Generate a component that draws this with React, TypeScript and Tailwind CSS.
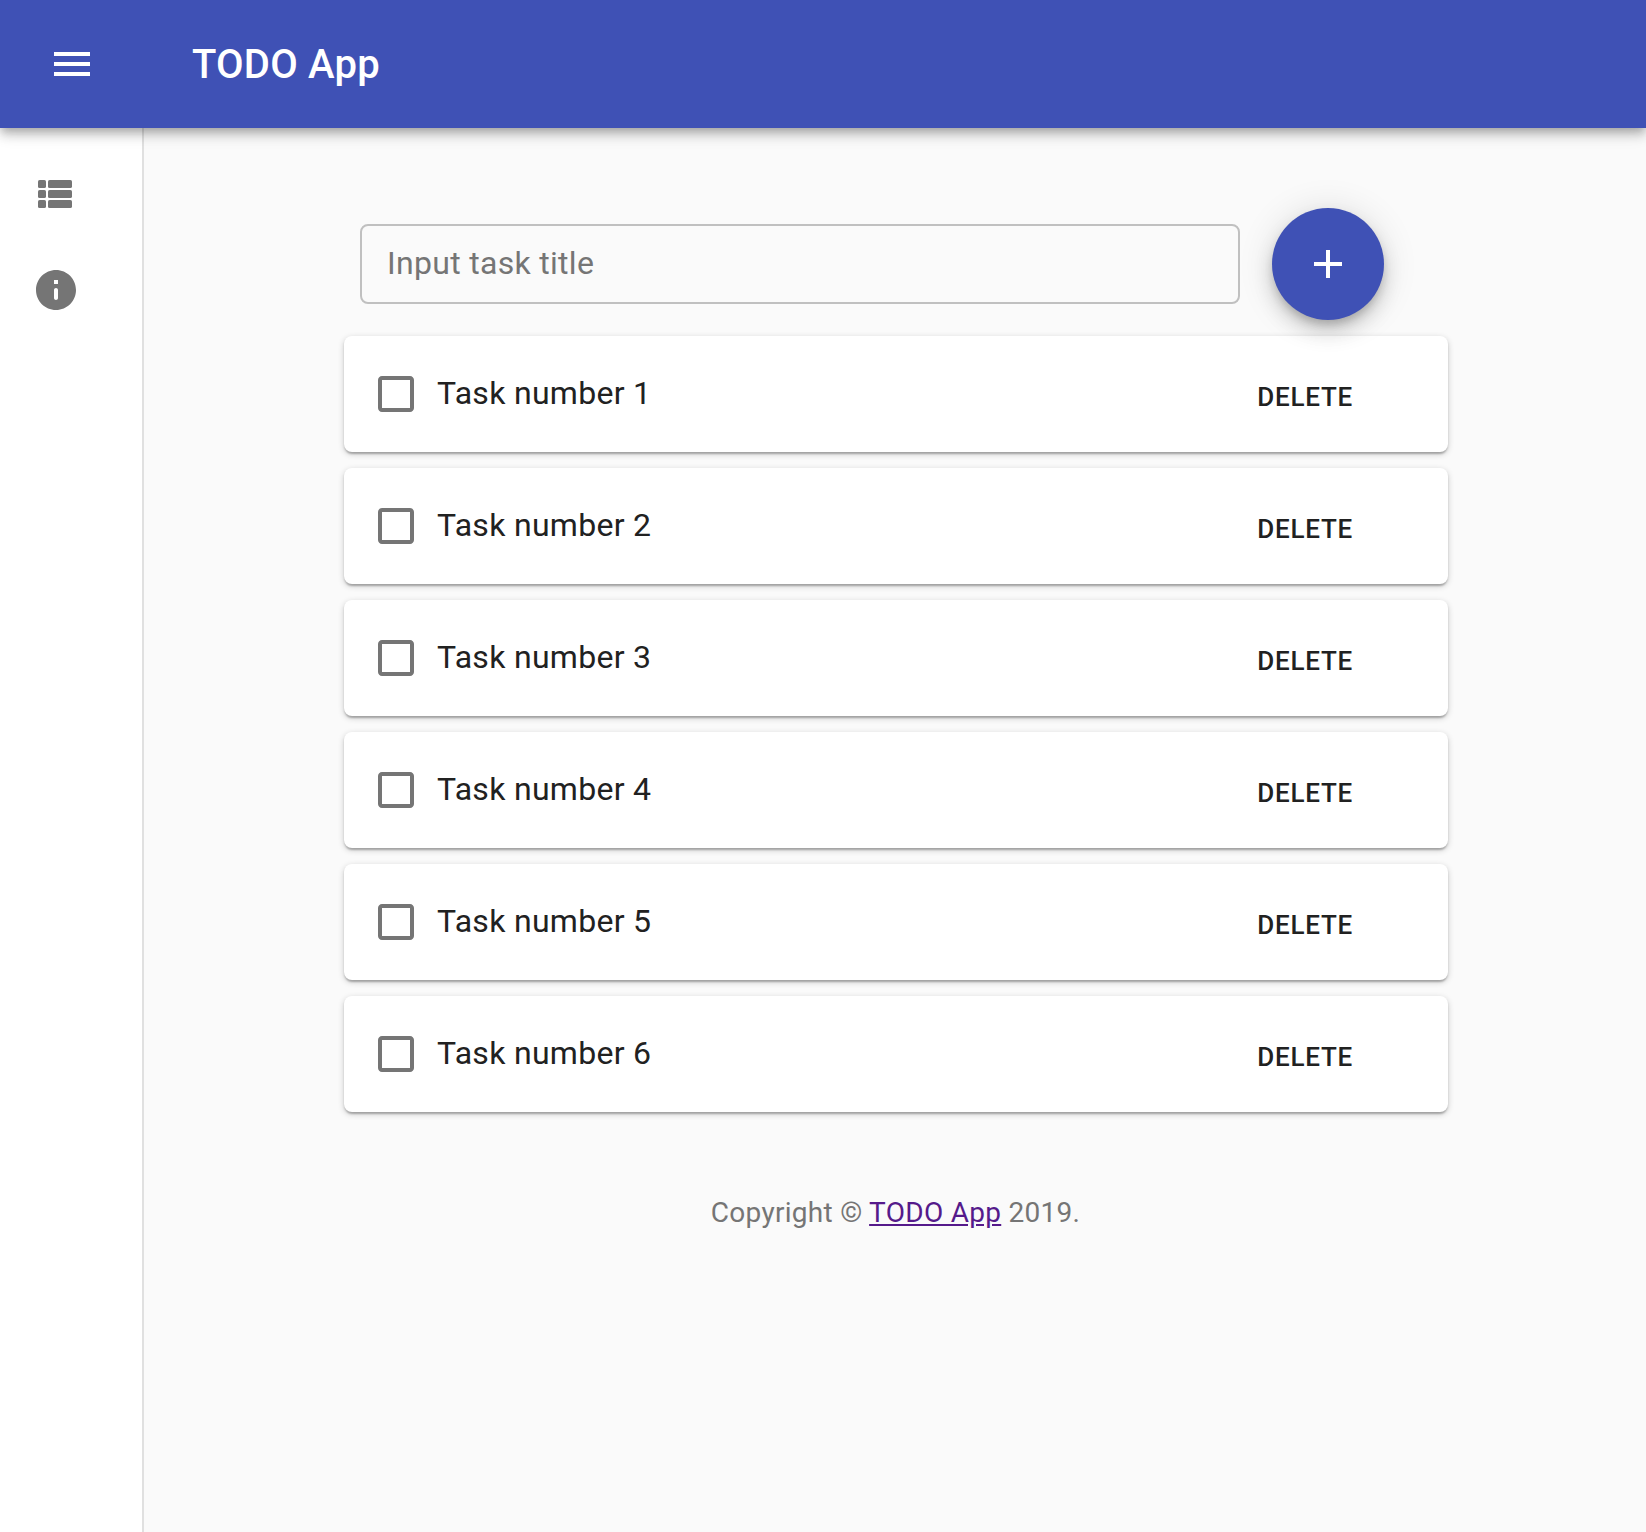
import React from "react";

const tasks = [1, 2, 3, 4, 5, 6].map((n) => `Task number ${n}`);

type IconProps = { children: React.ReactNode; className?: string };

function Icon({ children, className = "" }: IconProps) {
  return (
    <svg viewBox="0 0 24 24" fill="currentColor" className={`size-12 shrink-0 ${className}`}>
      {children}
    </svg>
  );
}

function Header() {
  return (
    <header className="relative z-20 flex h-32 shrink-0 items-center bg-[#3f51b5] pl-12 text-white shadow-[0_4px_8px_-2px_rgba(0,0,0,0.2),0_8px_10px_0_rgba(0,0,0,0.14),0_2px_20px_0_rgba(0,0,0,0.12)]">
      <button aria-label="Open menu">
        <Icon>
          <path d="M3 18h18v-2H3v2zm0-5h18v-2H3v2zm0-7v2h18V6H3z" />
        </Icon>
      </button>
      <h1 className="ml-24 pt-[2px] text-[40px] leading-[64px] font-medium tracking-[0.0055em]">TODO App</h1>
    </header>
  );
}

function Sidebar() {
  return (
    <nav className="flex w-36 shrink-0 flex-col border-r-2 border-[#e0e0e0] bg-white pt-[18px] text-[#757575]">
      <a className="flex h-24 items-center pl-8">
        <Icon>
          <rect x="3" y="5" width="4" height="4" rx="0.8" />
          <rect x="3" y="10" width="4" height="4" rx="0.8" />
          <rect x="3" y="15" width="4" height="4" rx="0.8" />
          <rect x="8" y="5" width="12" height="4" rx="0.8" />
          <rect x="8" y="10" width="12" height="4" rx="0.8" />
          <rect x="8" y="15" width="12" height="4" rx="0.8" />
        </Icon>
      </a>
      <a className="flex h-24 items-center pl-8">
        <Icon>
          <path d="M12 2C6.48 2 2 6.48 2 12s4.48 10 10 10 10-4.48 10-10S17.52 2 12 2zm0 15c-.55 0-1-.45-1-1v-4c0-.55.45-1 1-1s1 .45 1 1v4c0 .55-.45 1-1 1zm1-8h-2V7h2v2z" />
        </Icon>
      </a>
    </nav>
  );
}

function TaskForm() {
  return (
    <form className="relative z-10 flex h-28 items-center gap-8 pl-4">
      <input
        placeholder="Input task title"
        className="h-20 w-[880px] rounded-lg border-2 border-[#c0c0c0] bg-transparent px-[25px] pb-[2px] text-[32px] tracking-[0.00938em] placeholder:text-[#757575]"
      />
      <button
        type="button"
        aria-label="Add task"
        className="flex size-28 items-center justify-center rounded-full bg-[#3f51b5] text-white shadow-[0_6px_10px_-2px_rgba(0,0,0,0.2),0_12px_20px_0_rgba(0,0,0,0.14),0_2px_36px_0_rgba(0,0,0,0.12)]"
      >
        <Icon>
          <path d="M19 13h-6v6h-2v-6H5v-2h6V5h2v6h6v2z" />
        </Icon>
      </button>
    </form>
  );
}

function TaskCard({ title }: { title: string }) {
  return (
    <li className="flex h-[116px] items-center rounded-lg bg-white pr-[95px] pl-7 text-[#212121] shadow-[0_2px_6px_0_rgba(0,0,0,0.2),0_2px_2px_0_rgba(0,0,0,0.14),0_4px_2px_-2px_rgba(0,0,0,0.12)]">
      <Icon className="text-[#757575]">
        <path d="M19 5v14H5V5h14m0-2H5c-1.1 0-2 .9-2 2v14c0 1.1.9 2 2 2h14c1.1 0 2-.9 2-2V5c0-1.1-.9-2-2-2z" />
      </Icon>
      <span className="grow pb-[2px] pl-[17px] text-[32px] leading-[48px] tracking-[0.00938em]">{title}</span>
      <button className="pt-[6px] text-[26px] leading-[46px] font-medium tracking-[0.02857em]">DELETE</button>
    </li>
  );
}

export default function App() {
  return (
    <div className="flex h-[1532px] flex-col overflow-hidden bg-[#fafafa] font-['Roboto',sans-serif]">
      <Header />
      <div className="flex grow">
        <Sidebar />
        <main className="flex grow flex-col items-center pt-20 pl-[2px]">
          <div className="flex w-[1104px] flex-col gap-4">
            <TaskForm />
            <ul className="flex flex-col gap-4">
              {tasks.map((title) => (
                <TaskCard key={title} title={title} />
              ))}
            </ul>
          </div>
          <p className="mt-[81px] mr-px text-[28px] leading-10 tracking-[0.01em] text-[#757575]">
            Copyright © <a className="text-[#551a8b] underline">TODO App</a> 2019.
          </p>
        </main>
      </div>
    </div>
  );
}
